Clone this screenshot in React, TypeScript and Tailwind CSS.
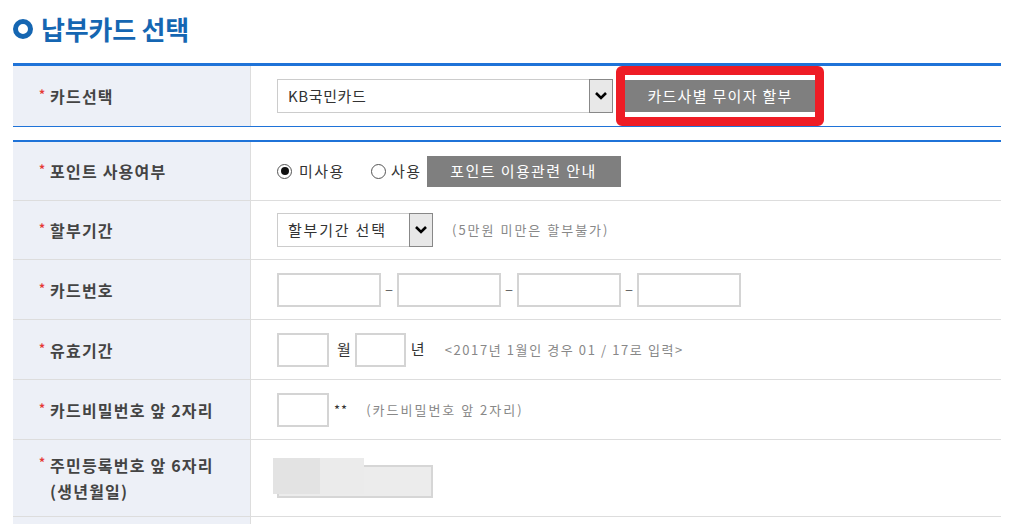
import type { ReactNode } from "react";

const FONT = "font-['Noto_Sans_CJK_KR','Noto_Sans',sans-serif]";

function Chevron() {
  return (
    <svg width="14" height="10" viewBox="0 0 14 10">
      <path d="M2 2 L7 7 L12 2" fill="none" stroke="#000" strokeWidth="2.6" />
    </svg>
  );
}

function FakeSelect({ value, width, track }: { value: string; width: string; track: string }) {
  return (
    <div className={`flex items-stretch h-[34px] border border-[#ccc] bg-white ${width}`}>
      <div className={`flex-1 flex items-center pl-[10px] text-[15px] text-[#333] ${track}`}>{value}</div>
      <div className="w-[24px] flex items-center justify-center bg-[#e8e8e8] border border-[#888] -m-px">
        <Chevron />
      </div>
    </div>
  );
}

function Input({ w }: { w: string }) {
  return <div className={`h-[34px] border-2 border-[#d4d4d4] bg-white ${w}`} />;
}

function Radio({ checked }: { checked?: boolean }) {
  return (
    <span className="w-[15px] h-[15px] rounded-full border border-[#555] bg-white flex items-center justify-center">
      {checked && <span className="w-[8px] h-[8px] rounded-full bg-[#111]" />}
    </span>
  );
}

function Dash() {
  return <span className="w-[16px] text-center text-[#666]">–</span>;
}

function Row({ label, h, children }: { label: ReactNode; h: string; children: ReactNode }) {
  return (
    <div className={`flex border-b border-[#ddd] ${h}`}>
      <div className="w-[238px] shrink-0 bg-[#edf0f7] border-r border-[#ddd] flex items-center pl-[26px] text-[16px] font-bold text-[#444] tracking-[1.2px]">
        {label}
      </div>
      <div className="flex-1 flex items-center pl-[26px] text-[15px] text-[#333]">{children}</div>
    </div>
  );
}

function Star() {
  return <span className="text-[#e53935] text-[12px] mr-[5px] self-start mt-[1px] tracking-normal">*</span>;
}

function Label({ text }: { text: string }) {
  return (
    <span className="flex items-center">
      <Star />
      {text}
    </span>
  );
}

function Note({ children, ml, track = "tracking-[2px]" }: { children: ReactNode; ml: string; track?: string }) {
  return <span className={`text-[13px] text-[#888] ${track} ${ml}`}>{children}</span>;
}

export default function App() {
  return (
    <div className={`${FONT} bg-white w-[1025px] h-[524px] overflow-hidden`}>
      <div className="pl-[13px] w-[1001px]">
        <h2 className="flex items-center h-[63px] pb-[6px] gap-[8px] text-[26px] font-bold text-[#1566b2] tracking-[-0.2px]">
          <span className="w-[20px] h-[20px] rounded-full border-[5px] border-[#1566b2]" />
          납부카드 선택
        </h2>

        <div className="border-t-[3px] border-[#1f73d8]">
          <div className="flex h-[61px] border-b border-[#1f73d8]">
            <div className="w-[238px] shrink-0 bg-[#edf0f7] border-r border-[#ddd] flex items-center pl-[26px] text-[16px] font-bold text-[#444] tracking-[1.2px]">
              <Label text="카드선택" />
            </div>
            <div className="flex-1 flex items-center pl-[26px] gap-[3px]">
              <FakeSelect value="KB국민카드" width="w-[336px]" track="tracking-[0.6px]" />
              <div className="border-[9px] border-[#ee1c25] rounded-[6px] w-[208px] h-[60px] flex">
                <button className="flex-1 bg-[#7f7f7f] border-y-[5px] border-white text-white text-[15px] font-normal tracking-[1.3px]">
                  카드사별 무이자 할부
                </button>
              </div>
            </div>
          </div>
        </div>

        <div className="h-[13px]" />

        <div className="border-t-2 border-[#1f73d8]">
          <Row label={<Label text="포인트 사용여부" />} h="h-[59px]">
            <label className="flex items-center gap-[7px] tracking-[1.5px]">
              <Radio checked />
              미사용
            </label>
            <label className="flex items-center gap-[5px] ml-[26px] tracking-[1.5px]">
              <Radio />
              사용
            </label>
            <button className="ml-[5px] w-[194px] h-[31px] bg-[#7f7f7f] text-white text-[15px] tracking-[1.4px]">
              포인트 이용관련 안내
            </button>
          </Row>
          <Row label={<Label text="할부기간" />} h="h-[59px]">
            <FakeSelect value="할부기간 선택" width="w-[156px]" track="tracking-[1.8px]" />
            <Note ml="ml-[19px]">(5만원 미만은 할부불가)</Note>
          </Row>
          <Row label={<Label text="카드번호" />} h="h-[60px]">
            <Input w="w-[104px]" />
            <Dash />
            <Input w="w-[104px]" />
            <Dash />
            <Input w="w-[104px]" />
            <Dash />
            <Input w="w-[104px]" />
          </Row>
          <Row label={<Label text="유효기간" />} h="h-[60px]">
            <Input w="w-[52px]" />
            <span className="ml-[8px] mr-[4px]">월</span>
            <Input w="w-[51px]" />
            <span className="ml-[5px]">년</span>
            <Note ml="ml-[20px]" track="tracking-[1.6px]">&lt;2017년 1월인 경우 01 / 17로 입력&gt;</Note>
          </Row>
          <Row label={<Label text="카드비밀번호 앞 2자리" />} h="h-[60px]">
            <Input w="w-[52px]" />
            <span className="ml-[5px] text-[13px] tracking-[1px]">**</span>
            <Note ml="ml-[18px]">(카드비밀번호 앞 2자리)</Note>
          </Row>
          <Row
            label={
              <span className="flex items-start">
                <Star />
                <span className="flex flex-col leading-[26px]">
                  <span>주민등록번호 앞 6자리</span>
                  <span>(생년월일)</span>
                </span>
              </span>
            }
            h="h-[77px]"
          >
            <div className="relative w-[160px] h-[40px] -ml-[4px]">
              <div className="absolute left-[4px] top-[7px] w-[156px] h-[33px] border-2 border-[#d6d6d6] bg-[#ececec]" />
              <div className="absolute left-0 top-0 w-[47px] h-[36px] bg-[#e3e3e3]" />
              <div className="absolute left-[47px] top-0 w-[44px] h-[36px] bg-[#ebebeb]" />
            </div>
          </Row>
          <div className="flex h-[20px]">
            <div className="w-[238px] bg-[#edf0f7] border-r border-[#ddd]" />
          </div>
        </div>
      </div>
    </div>
  );
}
